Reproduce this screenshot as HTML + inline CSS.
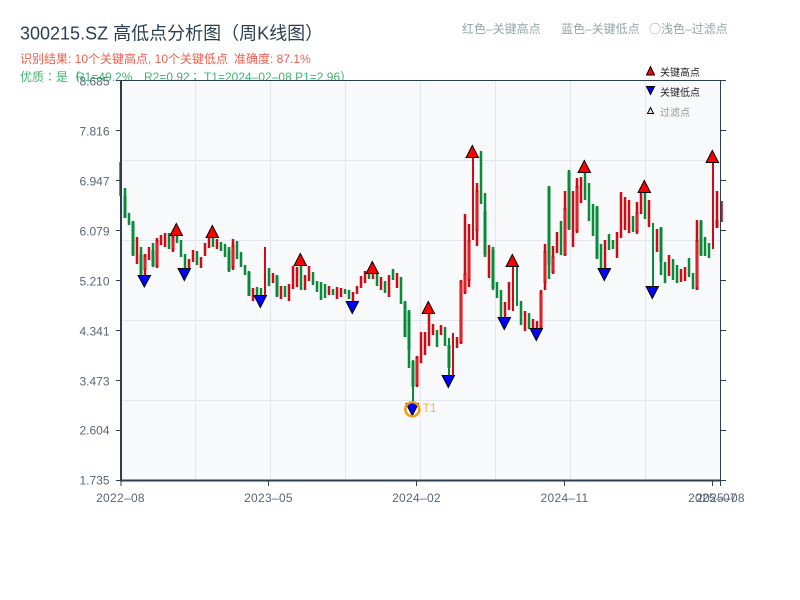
<!DOCTYPE html>
<html><head><meta charset="utf-8">
<style>
html,body{margin:0;padding:0;background:#fff;width:800px;height:600px;overflow:hidden}
svg{display:block;font-family:"Liberation Sans","Noto Sans CJK SC",sans-serif}
.c{font-family:"Noto Sans CJK SC",sans-serif}
.t{font-family:"Noto Sans CJK TC",sans-serif}
</style></head><body>
<svg width="800" height="600" viewBox="0 0 800 600" xmlns="http://www.w3.org/2000/svg">
<rect width="800" height="600" fill="#fff"/>
<text x="20" y="39.500" font-size="18" fill="#2c3e50">300215.SZ 高低点分析图（周K线图）</text>
<text x="20" y="63" font-size="12" fill="#e74c3c" fill-opacity="0.9">识别结果: 10个关键高点, 10个关键低点<tspan x="234">准确度: 87.1%</tspan></text>
<text y="81" font-size="12" fill="#27ae60" fill-opacity="0.9"><tspan x="20" class="t">优质：是（</tspan><tspan x="76">R1=49.2%</tspan><tspan x="144">R2=0.92</tspan><tspan x="189" class="t">；</tspan><tspan x="204">T1=2024–02–08 P1=2.96</tspan><tspan class="t">）</tspan></text>
<text x="462" y="33" font-size="12" fill="#95a5a6">红色–关键高点</text>
<text x="561" y="33" font-size="12" fill="#95a5a6">蓝色–关键低点</text>
<text x="649" y="33" font-size="12" fill="#95a5a6"><tspan class="c">○</tspan><tspan x="661">浅色–过滤点</tspan></text>

<rect x="121" y="80.500" width="600" height="400" fill="#f8f9fb"/>
<path d="M195.500 81V480M270.500 81V480M345.500 81V480M420.500 81V480M495.500 81V480M570.500 81V480M645.500 81V480M121 160.500H720M121 240.500H720M121 320.500H720M121 400.500H720" stroke="#e4e6ee" stroke-width="1" fill="none"/>

<g fill="none" stroke-width="2.500" transform="translate(0.500,0)">
<path stroke="#078a3a" d="M120 162V196M124.500 188V218M128.500 213V225M132.500 221V256M140.500 247V276M152.500 243V267M168.500 233V249M176.500 235V243M180.500 240V257M184.500 254V268M196.500 251V265M212.500 237V247M220.500 242V251M224.500 244V257M228.500 247V272M236.500 241V259M240.500 252V267M244.500 265V275M248.500 271V296M256.500 287V297M260.500 288V297M268.500 268V286M276.500 275V297M284.500 286V297M300.500 265V290M312.500 272V285M316.500 281V292M320.500 282V300M324.500 284V298M332.500 289V295M344.500 289V294M348.500 290V299M368.500 270V279M376.500 273V286M384.500 281V293M392.500 269V280M400.500 277V304M404.500 301V337M408.500 310V368M436.500 330V347M444.500 327V346M480.500 151V204M484.500 193V257M492.500 247V290M496.500 282V298M500.500 290V320M520.500 301V325M528.500 313V329M548.500 186V279M560.500 221V255M568.500 170V230M584.500 173V200M588.500 183V221M592.500 204V236M596.500 206V259M600.500 244V268M608.500 234V250M612.500 240V249M632.500 216V232M644.500 192V219M660.500 227V275M664.500 262V283M672.500 259V280M676.500 265V283M688.500 258V277M692.500 273V289M700.500 220V256M704.500 237V256M708.500 243V258"/>
<path stroke="#078a3a" stroke-width="2" d="M412.500 360V407M448.500 338V377M516.500 266V306M652.500 223V287"/>
<path stroke="#078a3a" stroke-width="3" d="M124.500 196V218M132.500 222V255M140.500 254V274M152.500 250V266M228.500 250V271M248.500 272V296M276.500 276V296M404.500 302V337M408.500 311V350M412.500 361V387M448.500 345V368M484.500 211V255M492.500 250V288M548.500 187V265M568.500 172V229M596.500 207V258M660.500 228V262M700.500 221V255"/>
<path stroke="#cc0b14" d="M136.500 237V264M144.500 254V276M148.500 247V260M156.500 238V268M160.500 235V245M164.500 233V247M172.500 235V252M188.500 259V268M192.500 250V262M200.500 257V268M204.500 243V256M208.500 235V248M216.500 239V249M232.500 239V270M252.500 288V301M272.500 273V283M280.500 286V299M288.500 284V301M292.500 266V289M296.500 267V287M304.500 275V290M308.500 266V281M328.500 286V295M336.500 287V299M340.500 288V297M352.500 292V302M356.500 286V294M360.500 276V288M364.500 271V283M372.500 273V279M380.500 277V290M388.500 275V297M396.500 273V288M416.500 356V387M420.500 332V363M424.500 332V355M428.500 313V346M432.500 324V335M440.500 325V335M456.500 337V348M460.500 280V344M464.500 214V294M468.500 224V287M476.500 183V246M488.500 245V278M504.500 302V318M508.500 282V310M524.500 311V331M532.500 319V329M536.500 321V330M540.500 290V330M544.500 244V290M552.500 246V274M556.500 232V253M564.500 191V256M572.500 191V247M576.500 178V233M580.500 177V203M604.500 240V268M616.500 232V258M620.500 192V238M624.500 197V230M628.500 200V233M636.500 202V234M640.500 192V214M648.500 200V227M656.500 229V252M668.500 255V276M680.500 269V282M684.500 267V281M696.500 220V290M716.500 191V228M721 201V222"/>
<path stroke="#cc0b14" stroke-width="2" d="M264.500 247V297M452.500 333V376M472.500 157V240M512.500 265V311M712.500 163V249"/>
<path stroke="#cc0b14" stroke-width="3" d="M144.500 255V270M156.500 240V267M172.500 236V250M232.500 245V268M416.500 357V386M460.500 281V343M464.500 273V293M468.500 240V281M476.500 190V231M540.500 292V328M544.500 251V283M552.500 256V273M564.500 208V255M576.500 186V232M636.500 212V232M696.500 240V289M716.500 220V228"/>
<path stroke="#f0383a" stroke-width="1" d="M144.500 257V268M156.500 242V265M172.500 238V248M232.500 247V266M416.500 359V384M460.500 283V341M464.500 275V291M468.500 242V279M476.500 192V229M540.500 294V326M544.500 253V281M552.500 258V271M564.500 210V253M576.500 188V230M636.500 214V230M696.500 242V287"/>
</g>

<g fill="#ff0000" stroke="#000" stroke-width="1">
<path d="M176.300 223.500L182.500 235.500H170.100Z"/>
<path d="M212.300 225.500L218.500 237.500H206.100Z"/>
<path d="M300.300 253.500L306.500 265.500H294.100Z"/>
<path d="M372.300 261.500L378.500 273.500H366.100Z"/>
<path d="M428.300 301.500L434.500 313.500H422.100Z"/>
<path d="M472.300 145.500L478.500 157.500H466.100Z"/>
<path d="M512.300 254.500L518.500 266.500H506.100Z"/>
<path d="M584.300 160.500L590.500 172.500H578.100Z"/>
<path d="M644.300 180.500L650.500 192.500H638.100Z"/>
<path d="M712.300 150.500L718.500 162.500H706.100Z"/>
</g>
<g fill="#0000ff" stroke="#000" stroke-width="1">
<path d="M144.300 287L150.500 275.500H138.100Z"/>
<path d="M184.300 280.500L190.500 268.500H178.100Z"/>
<path d="M260.300 307.500L266.500 295.500H254.100Z"/>
<path d="M352.300 313.500L358.500 301.500H346.100Z"/>
<path d="M412.300 415.500L418.500 403.500H406.100Z"/>
<path d="M448.300 387.500L454.500 375.500H442.100Z"/>
<path d="M504.300 329.500L510.500 317.500H498.100Z"/>
<path d="M536.300 340.500L542.500 328.500H530.100Z"/>
<path d="M604.300 280.500L610.500 268.500H598.100Z"/>
<path d="M652.300 298.500L658.500 286.500H646.100Z"/>
</g>
<circle cx="412.300" cy="409.300" r="7" fill="none" stroke="#f39c12" stroke-width="2.500"/>
<text x="422.500" y="412" font-size="12" fill="#f39c12" fill-opacity="0.75">T1</text>

<path d="M121 80.500H726M720.500 80.500V480M721 130.500H726M721 180.500H726M721 230.500H726M721 280.500H726M721 330.500H726M721 380.500H726M721 430.500H726M721 480.500H726" stroke="#2c3e50" stroke-width="1" fill="none"/>
<path d="M116 80.500H121M116 130.500H121M116 180.500H121M116 230.500H121M116 280.500H121M116 330.500H121M116 380.500H121M116 430.500H121M116 480.500H121M121 481V486M268.500 481V486M416.500 481V486M564.500 481V486M712.500 481V486M720.500 481V486" stroke="#2c3e50" stroke-width="1" fill="none"/>
<path d="M121 80V481M120 480.500H721" stroke="#2c3e50" stroke-width="2" fill="none"/>

<g font-size="12" fill="#5a6573" text-anchor="end">
<text x="109.500" y="85.500">8.685</text>
<text x="109.500" y="135.500">7.816</text>
<text x="109.500" y="185.500">6.947</text>
<text x="109.500" y="235.500">6.079</text>
<text x="109.500" y="285.500">5.210</text>
<text x="109.500" y="335.500">4.341</text>
<text x="109.500" y="385.500">3.473</text>
<text x="109.500" y="434.500">2.604</text>
<text x="109.500" y="484.500">1.735</text>
</g>
<g font-size="12" fill="#5a6573" text-anchor="middle" letter-spacing="0.300">
<text x="120.500" y="502">2022–08</text>
<text x="268.500" y="502">2023–05</text>
<text x="416.500" y="502">2024–02</text>
<text x="564.500" y="502">2024–11</text>
<text x="712.500" y="502">2025–07</text>
<text x="720.500" y="502">2025–08</text>
</g>

<path d="M650.500 66.500L654.500 75H646.500Z" fill="#ff0000" stroke="#000" stroke-width="1"/>
<path d="M650.500 94.500L654.500 86.500H646.500Z" fill="#0000ff" stroke="#000" stroke-width="1"/>
<path d="M650.500 107.500L653.500 113.500H647.500Z" fill="#fdd" stroke="#000" stroke-width="1"/>
<text x="660" y="76" font-size="10" fill="#222">关键高点</text>
<text x="660" y="96" font-size="10" fill="#222">关键低点</text>
<text x="660" y="116" font-size="10" fill="#999">过滤点</text>
</svg>
</body></html>
